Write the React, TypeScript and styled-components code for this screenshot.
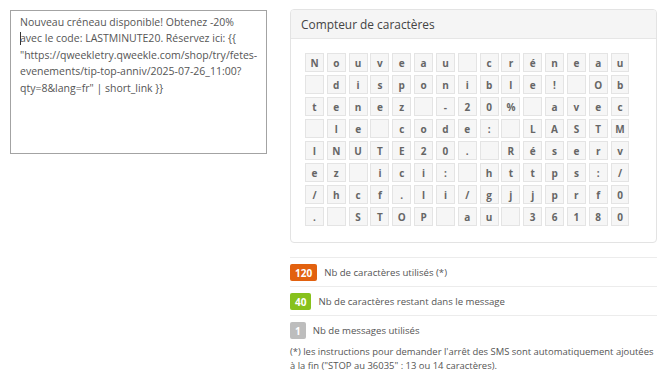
import React from "react";
import styled, { createGlobalStyle } from "styled-components";

const GlobalStyle = createGlobalStyle`
  html, body { margin: 0; padding: 0; background: #ffffff; }
  body { font-family: "Open Sans", "DejaVu Sans", sans-serif; color: #555; }
  * { box-sizing: border-box; }
`;

const Page = styled.div`
  display: flex;
  align-items: flex-start;
  gap: 23px;
  padding: 9px 13px 0 10px;
  width: 670px;
`;

const Editor = styled.div`
  margin-top: 1px;
  width: 257px;
  height: 144px;
  border: 1px solid #a3a3a3;
  padding: 3px 8px 0 9px;
  font-size: 10.5px;
  line-height: 16.4px;
  color: #555;
  white-space: nowrap;
`;

const Caret = styled.span`
  display: inline-block;
  width: 1px;
  height: 13px;
  background: #333;
  vertical-align: -3px;
  margin-right: -1px;
`;

const Side = styled.div`
  width: 367px;
  display: flex;
  flex-direction: column;
`;

const Panel = styled.section`
  border: 1px solid #e3e3e3;
  border-radius: 4px;
  background: #fff;
  overflow: hidden;
`;

const PanelHeader = styled.header`
  height: 29px;
  background: #f5f5f5;
  border-bottom: 1px solid #e6e6e6;
  padding: 0 10px;
  display: flex;
  align-items: center;
  font-size: 11.9px;
  color: #444;
`;

const PanelBody = styled.div`
  padding: 14px 14px 16px 14px;
`;

const CharGrid = styled.div`
  display: grid;
  grid-template-columns: repeat(15, 18.9px);
  grid-auto-rows: 19px;
  column-gap: 2.95px;
  row-gap: 3px;
  width: 324px;
`;

const Cell = styled.div`
  background: #f6f6f6;
  border: 1px solid #e4e4e4;
  display: flex;
  align-items: center;
  justify-content: center;
  font-size: 10px;
  font-weight: 700;
  color: #666;
`;

const Stats = styled.ul`
  list-style: none;
  margin: 14px 0 0 0;
  padding: 0;
`;

const StatRow = styled.li`
  height: 29px;
  display: flex;
  align-items: center;
  gap: 7px;
  border-top: 1px solid #ececec;
  font-size: 9.6px;
  color: #555;
  padding-top: 1px;
`;

const Badge = styled.span<{ $tone: string }>`
  display: inline-flex;
  align-items: center;
  justify-content: center;
  height: 17px;
  padding: 0 5px;
  border-radius: 2px;
  background: ${(p) => p.$tone};
  color: #fff;
  font-size: 10px;
  font-weight: 700;
`;

const Note = styled.p`
  margin: 1px 0 0 0;
  font-size: 9.45px;
  line-height: 14px;
  color: #555;
`;

const MESSAGE =
  "Nouveau créneau disponible! Obtenez -20% avec le code: LASTMINUTE20. Réservez ici: https://hcf.li/gjjprf0. STOP au 36180";

export default function App() {
  const chars = Array.from(MESSAGE);
  return (
    <>
      <GlobalStyle />
      <Page>
        <Editor>
          Nouveau créneau disponible! Obtenez -20%
          <br />
          <Caret />
          avec le code: LASTMINUTE20. Réservez ici: {"{{"}
          <br />
          "https://qweekletry.qweekle.com/shop/try/fetes-
          <br />
          evenements/tip-top-anniv/2025-07-26_11:00?
          <br />
          qty=8&amp;lang=fr" | short_link {"}}"}
        </Editor>
        <Side>
          <Panel>
            <PanelHeader>Compteur de caractères</PanelHeader>
            <PanelBody>
              <CharGrid>
                {chars.map((c, i) => (
                  <Cell key={i}>{c === " " ? "" : c}</Cell>
                ))}
              </CharGrid>
            </PanelBody>
          </Panel>
          <Stats>
            <StatRow>
              <Badge $tone="#e2610f">120</Badge>
              Nb de caractères utilisés (*)
            </StatRow>
            <StatRow>
              <Badge $tone="#87c11c">40</Badge>
              Nb de caractères restant dans le message
            </StatRow>
            <StatRow>
              <Badge $tone="#bdbdbd">1</Badge>
              Nb de messages utilisés
            </StatRow>
          </Stats>
          <Note>
            (*) les instructions pour demander l'arrêt des SMS sont automatiquement ajoutées à la fin ("STOP au 36035" : 13 ou 14 caractères).
          </Note>
        </Side>
      </Page>
    </>
  );
}
